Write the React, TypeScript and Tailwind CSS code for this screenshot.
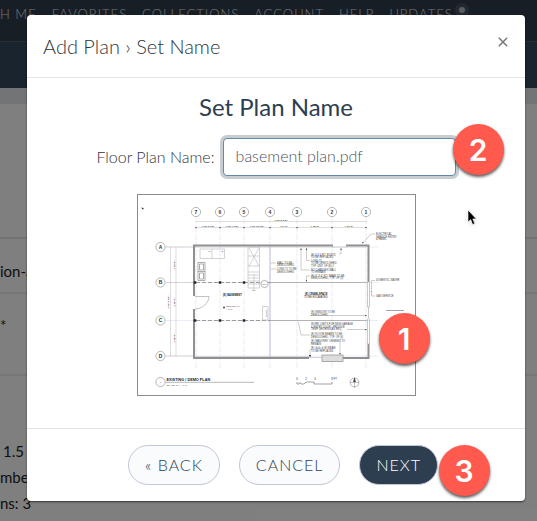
import React from 'react';
import clsx from 'clsx';

const navLinks = ['FAVORITES', 'COLLECTIONS', 'ACCOUNT', 'HELP', 'UPDATES'];

const columns = [
    { label: '7', x: 59 },
    { label: '6', x: 83 },
    { label: '5', x: 107 },
    { label: '4', x: 133 },
    { label: '3', x: 160 },
    { label: '2', x: 195 },
    { label: '1', x: 229 },
];

const rows = [
    { label: 'A', y: 53 },
    { label: 'B', y: 88.5 },
    { label: 'C', y: 126.5 },
    { label: 'D', y: 162 },
];

const dimensions = [
    { text: `± 10'-0 1/2"`, x: 71 },
    { text: `± 10'-7 1/2"`, x: 95 },
    { text: `± 10'-10 1/2"`, x: 120 },
    { text: `± 9'-3"`, x: 147 },
    { text: `± 15'-0"`, x: 178 },
    { text: `± 11'-6"`, x: 212 },
];

const notes = [
    { x: 140, y: 69.5, lines: ['WALL TO BE', 'DEMOLISHED'] },
    { x: 140, y: 76, lines: ['LONG T1 TO BE', 'DEMOLISHED'] },
    { x: 174, y: 61.5, lines: ['(E) 6 X 6 P.T. POSTS', 'TO BE REPLACED'] },
    { x: 174, y: 67.5, lines: ['LONG T1', 'TO BE DEMOLISHED', 'TYP. UNIT OF (E) 2'] },
    { x: 174, y: 76.5, lines: ['NO CHANGES WALL', 'TO REMAIN'] },
    { x: 174, y: 82.5, lines: ['(E) 6" X 6" P.T. BEAM TO BE', 'DEMOLISHED, TYP. OF (3)'] },
    { x: 174, y: 119, lines: ['(E) WINDOW TO BE', 'DEMOLISHED'] },
    { x: 174, y: 131, lines: ['WORK LIMITS FOR NEW GARAGE', '& ENTRY DOOR - PROVIDE', 'TEMP SHORING AS REQ.'] },
    { x: 174, y: 141, lines: ['(E) FLOOR BEAMS TO BE', 'DEMOLISHED, TYP. OF (6)'] },
    { x: 174, y: 148, lines: ['(E) MASONRY CHIMNEY TO', 'REMAIN'] },
    { x: 174, y: 155, lines: ['(E) 4x4s & (E) BEAM', 'TO BE REPLACED'] },
    { x: 239, y: 41, lines: ['ELECTRICAL', 'SERVICE ENTRY', '& PANEL'] },
    { x: 239, y: 87, lines: ['DOMESTIC WATER'] },
    { x: 239, y: 102.5, lines: ['GAS SERVICE'] },
];

const FloorPlan: React.FC = () => (
    <svg viewBox="0 0 279 202" className="block w-full" role="img" aria-label="Basement floor plan" fontFamily="Liberation Sans, sans-serif">
        <rect x="0.5" y="0.5" width="278" height="201" fill="#fff" stroke="#8c8c8c" />
        <path d="M4.5 13.5l2 .5v1.500l-1.500-.5z" fill="#333" />

        {/* grid */}
        <g stroke="#d6d7ee" strokeWidth="0.5">
            {columns.map((c) => (
                <path key={c.label} d={`M${c.x} 23V175`} strokeDasharray="7 1" />
            ))}
            {rows.map((r) => (
                <path key={r.label} d={`M29 ${r.y}H241`} />
            ))}
        </g>
        <path d="M133 53V164" stroke="#a9a9d0" strokeWidth="0.7" />
        <g fill="#fff" stroke="#999" strokeWidth="0.7">
            {columns.map((c) => (
                <circle key={c.label} cx={c.x} cy="18" r="4.600" />
            ))}
            {rows.map((r) => (
                <circle key={r.label} cx="23.5" cy={r.y} r="4.600" />
            ))}
            <circle cx="23.5" cy="188" r="4.600" />
        </g>
        <g fill="#333" fontSize="5" fontWeight="700" textAnchor="middle">
            {columns.map((c) => (
                <text key={c.label} x={c.x} y="19.8">{c.label}</text>
            ))}
            {rows.map((r) => (
                <text key={r.label} x="23.5" y={r.y + 1.8}>{r.label}</text>
            ))}
        </g>

        {/* dimension strings */}
        <g stroke="#bbb" strokeWidth="0.5" fill="none">
            <path d="M59 27.5H230M59 33.500H230M33.500 53V162M39 53V162" />
            <path d="M29 53H57M29 88.500H57M29 162H57" />
        </g>
        <g fill="#444" fontSize="2.5" fontWeight="700" textAnchor="middle">
            {columns.map((c) => (
                <rect key={c.label} x={c.x - 0.6} y="33" width="1.2" height="1.2" />
            ))}
            {dimensions.map((d) => (
                <text key={d.text} x={d.x} y="32.500">{d.text}</text>
            ))}
            <text x="144" y="26.500">± 69'-2 1/2"</text>
            <text transform="translate(37.500 71) rotate(-90)">± 14'-9"</text>
            <text transform="translate(37.500 108) rotate(-90)">± 16'-0"</text>
            <text transform="translate(37.500 144) rotate(-90)">± 15'-0"</text>
            <text transform="translate(31.500 108) rotate(-90)">± 46'-0 1/2"</text>
        </g>

        {/* walls */}
        <path d="M57 102V51.500H196M209 51.500H231.500V88M57 115V164H172M206 164H231.500V150" fill="none" stroke="#909090" strokeWidth="2" />
        <path d="M58 53H196V54M209 54V53H229M58 162.500H172" fill="none" stroke="#b9b9b9" strokeWidth="0.5" />
        <path d="M230.500 88V113H232.500V88M230.500 125V150H232.500V125M231.500 113V125" fill="none" stroke="#a4a4a4" strokeWidth="0.6" />
        <path d="M172 163.500H185M196 53H209" stroke="#b5b5b5" strokeWidth="0.6" />
        <rect x="185" y="161" width="21" height="6.500" fill="#ddd" stroke="#8d8d8d" strokeWidth="0.7" />
        <path d="M59 88.500H133M59 126.500H133" stroke="#888" strokeWidth="0.8" strokeDasharray="4 2" />
        <path d="M133 88.500H230M133 126.500H230" stroke="#999" strokeWidth="0.7" />
        <g fill="#222">
            {[58, 83, 107].map((x) => (
                <React.Fragment key={x}>
                    <rect x={x - 1.3} y="87.3" width="2.6" height="2.4" />
                    <rect x={x - 1.3} y="125.3" width="2.6" height="2.4" />
                </React.Fragment>
            ))}
        </g>

        {/* door, fixtures and stairs */}
        <path d="M58 102.500H72C72 109 65 115 58 115" fill="none" stroke="#999" strokeWidth="0.6" />
        <g fill="none" stroke="#b5b5b5" strokeWidth="0.6">
            <path d="M63 55H87.500V64.500H63ZM75 55V64.500" />
            <path d="M61 68.500H68V86.500H61ZM61 77.500H68M62.500 70H66.500V76H62.500ZM62.500 79H66.500V85H62.500Z" stroke="#777" />
            <path d="M111 53H122.500V94H111ZM112 54L122 72M122 54L112 72M111 62H122.500M111 72H122.500M111 78H122.500M111 81H122.500M111 84H122.500M111 87H122.500M111 90H122.500M117 80V96" />
            <circle cx="127.5" cy="90" r="3.600" fill="#fff" stroke="#888" />
            <path d="M125.500 112.500H131V126H125.500Z" />
        </g>
        <g fill="#444" fontSize="2.4">
            <text x="71.5" y="57.5">W</text>
            <text x="84.500" y="57.500">D</text>
            <text x="127.5" y="91" textAnchor="middle">104</text>
            <text transform="translate(129.500 123) rotate(-90)">FURN.</text>
            <text x="115" y="97">UP</text>
            <text x="89" y="113">CEILING HT.</text>
            <text x="89" y="115.500">± 7'-6"</text>
            <circle cx="87" cy="113.5" r="1" />
        </g>
        <g fill="#222" fontSize="2.600" fontWeight="700">
            <text x="86" y="101.500">(E) BASEMENT</text>
            <text x="168" y="101">(E) CRAWLSPACE</text>
            <text x="167" y="103.500" fontWeight="400">TO BE EXCAVATED</text>
        </g>

        {/* notes and leaders */}
        <g fill="#444" fontSize="2.600">
            {notes.map((n) => (
                <text key={n.y + n.x} x={n.x} y={n.y}>
                    {n.lines.map((line, i) => (
                        <tspan key={line} x={n.x} dy={i === 0 ? 0 : 2.6}>{line}</tspan>
                    ))}
                </text>
            ))}
        </g>
        <g fill="none" stroke="#999" strokeWidth="0.5">
            <path d="M173 66.500H169.500V54M173 76H164V54M173 82H169.500V87M202 60H204V54M139 69H134M139 75H134" />
            <path d="M238 40H234L226 49M238 86.500H234.500V93M238 102H234.500V97" />
            <path d="M173 121.500H230M173 141H164L161.500 128M202 147H203V160M173 155L173 162M210 135.500H230" />
        </g>
        <path d="M249 116.500H267" stroke="#666" strokeWidth="0.6" />
        <g fill="#444">
            <path d="M225 49.500l.5-1.800 1.300 1zM163.300 56l.7-2 .7 2zM168.800 56l.7-2 .7 2zM203.300 56l.7-2 .7 2zM168.800 86l.7 2 .7-2z" />
            <path d="M202.300 159l.7 2 .7-2zM172 161h2v1.500h-2zM228 121l2 .5-2 .7zM228 135l2 .5-2 .7z" />
        </g>
        <g fill="#cc5555">
            <circle cx="234.5" cy="94" r="0.6" />
            <circle cx="234.5" cy="97" r="0.6" />
        </g>

        {/* title block */}
        <path d="M28.500 188.300H117" stroke="#888" strokeWidth="0.6" />
        <text x="23.500" y="189" fontSize="2.400" textAnchor="middle" fill="#555">1</text>
        <text x="29.500" y="187" fontSize="3.800" fontWeight="700" fill="#222">EXISTING / DEMO PLAN</text>
        <text x="29.500" y="191.500" fontSize="2.400" fill="#444">SCALE:   1/4" = 1'-0"</text>
        <g fill="#333" fontSize="2.800" textAnchor="middle">
            <text x="160" y="186">0</text>
            <text x="169" y="186">2</text>
            <text x="178" y="186">4</text>
            <text x="197" y="186">8 FT</text>
        </g>
        <path d="M160 188V190H162L163 188.500 164 190H167L169 188H177V190H195V188" fill="none" stroke="#666" strokeWidth="0.6" />
        <circle cx="217.500" cy="188.500" r="4.400" fill="none" stroke="#888" strokeWidth="0.6" />
        <path d="M213 188.500H222M217.500 184V194" stroke="#888" strokeWidth="0.5" />
        <path d="M217.500 183l1.400 5h-2.800z" fill="#444" />
    </svg>
);

interface StepBadgeProps {
    step: number;
    className?: string;
}

const StepBadge: React.FC<StepBadgeProps> = ({ step, className }) => (
    <span
        className={clsx(
            'absolute flex h-[51px] w-[51px] items-center justify-center rounded-full bg-[#ff5a4d] font-[Inter,sans-serif] text-3xl font-semibold leading-none text-white shadow-[0_2px_3px_rgba(0,0,0,0.65)]',
            className,
        )}
    >
        {step}
    </span>
);

const PageBehind: React.FC = () => (
    <div aria-hidden="true" className="absolute inset-0 overflow-hidden whitespace-nowrap text-[#222]">
        <header className="bg-[#2f3d4d] text-white">
            <nav className="flex h-[42px] gap-[15px] border-b border-[#4d5a68] pt-1 text-[13px] leading-5 tracking-[1px] text-[#e6e6e6]">
                <span>H ME</span>
                {navLinks.map((link) => (
                    <span key={link} className="relative">
                        {link}
                        {link === 'UPDATES' && (
                            <i className="absolute -right-4 -top-px h-[14px] w-[14px] rounded-full border-4 border-[#46525f] bg-[#b8babf]" />
                        )}
                    </span>
                ))}
            </nav>
            <div className="h-[46px] bg-[#34495c]" />
        </header>
        <div className="h-4 bg-[#e6e8ec]" />
        <div className="h-[135px] border-b-2 border-[#e4e6ea] bg-white" />
        <div className="flex h-[55px] items-center border-b-2 border-[#ececec] bg-white pt-3 text-[15px] font-normal">ion-alpha</div>
        <div className="h-[82px] border-b-2 border-[#ececec] bg-white pt-5 text-[15px] font-normal">*</div>
        <div className="h-[145px] bg-white pt-[62px] text-[15px] font-normal leading-[26px]">
            <p className="pl-[3px]">1.5 GB</p>
            <p>mbed</p>
            <p>ns: 3</p>
        </div>
    </div>
);

export default function App() {
    return (
        <div className="relative min-h-screen overflow-hidden bg-white font-[Lato,sans-serif] font-light">
            <PageBehind />
            <div className="relative min-h-screen bg-black/50 pb-5 pl-[27px] pr-3 pt-[15px]">
                <section
                    role="dialog"
                    aria-labelledby="dialog-title"
                    className="relative rounded bg-white shadow-[0_1px_2px_rgba(0,0,0,0.6)]"
                >
                    <header className="flex h-[63px] items-center justify-between border-b border-[#e2e4e7] px-4">
                        <h1 id="dialog-title" className="text-xl font-light text-[#2f353a]">Add Plan › Set Name</h1>
                        <button type="button" aria-label="Close" className="mb-2 flex h-3 w-3 items-center justify-center text-[#777]">
                            <svg viewBox="0 0 10 10" className="h-[10px] w-[10px]" stroke="currentColor" strokeWidth="1.5">
                                <path d="M.8.8l8.400 8.400M9.200.8L.8 9.200" />
                            </svg>
                        </button>
                    </header>

                    <div className="flex flex-col items-center pb-8 pt-[13px]">
                        <h2 className="text-2xl font-normal leading-8 text-[#2d3e50]">Set Plan Name</h2>
                        <div className="mt-[15px] flex items-center gap-2">
                            <label htmlFor="plan-name" className="text-base text-[#2f353a]">Floor Plan Name:</label>
                            <div className="relative">
                                <input
                                    id="plan-name"
                                    type="text"
                                    defaultValue="basement plan.pdf"
                                    className="block h-[38px] w-[233px] rounded border border-[#6288ab] bg-white px-3 pb-1 text-base text-[#4b545d] shadow-[0_0_0_3px_#c8cdd1] outline-none"
                                />
                                <StepBadge step={2} className="-right-12 -top-[14px]" />
                            </div>
                        </div>
                        <div className="relative mt-[18px] w-[279px]">
                            <FloorPlan />
                            <StepBadge step={1} className="-right-[14px] bottom-8" />
                        </div>
                    </div>

                    <footer className="flex items-center justify-center gap-[19px] border-t border-[#dfe3ea] py-4 pl-[14px] text-base tracking-[1px]">
                        <button type="button" className="h-10 rounded-full border border-[#c3c5d8] bg-[#fafbfd] px-4 text-[#2d3e50]">« BACK</button>
                        <button type="button" className="h-10 rounded-full border border-[#c3c5d8] bg-[#fafbfd] px-4 text-[#2d3e50]">CANCEL</button>
                        <div className="relative">
                            <button type="button" className="h-10 rounded-full border border-[#c3c5d8] bg-[#2d3e50] px-4 tracking-[1px] text-white">NEXT</button>
                            <StepBadge step={3} className="-right-[52px] top-0" />
                        </div>
                    </footer>

                    {/* mouse pointer */}
                    <svg viewBox="0 0 10 17" className="absolute right-12 top-[194px] h-[17px] w-[10px] drop-shadow-sm" aria-hidden="true">
                        <path d="M1 1V13L3.700 10.600 5.600 15.500 7.800 14.600 5.800 9.900H9.300Z" fill="#000" stroke="#fff" strokeWidth="0.6" />
                    </svg>
                </section>
            </div>
        </div>
    );
}
